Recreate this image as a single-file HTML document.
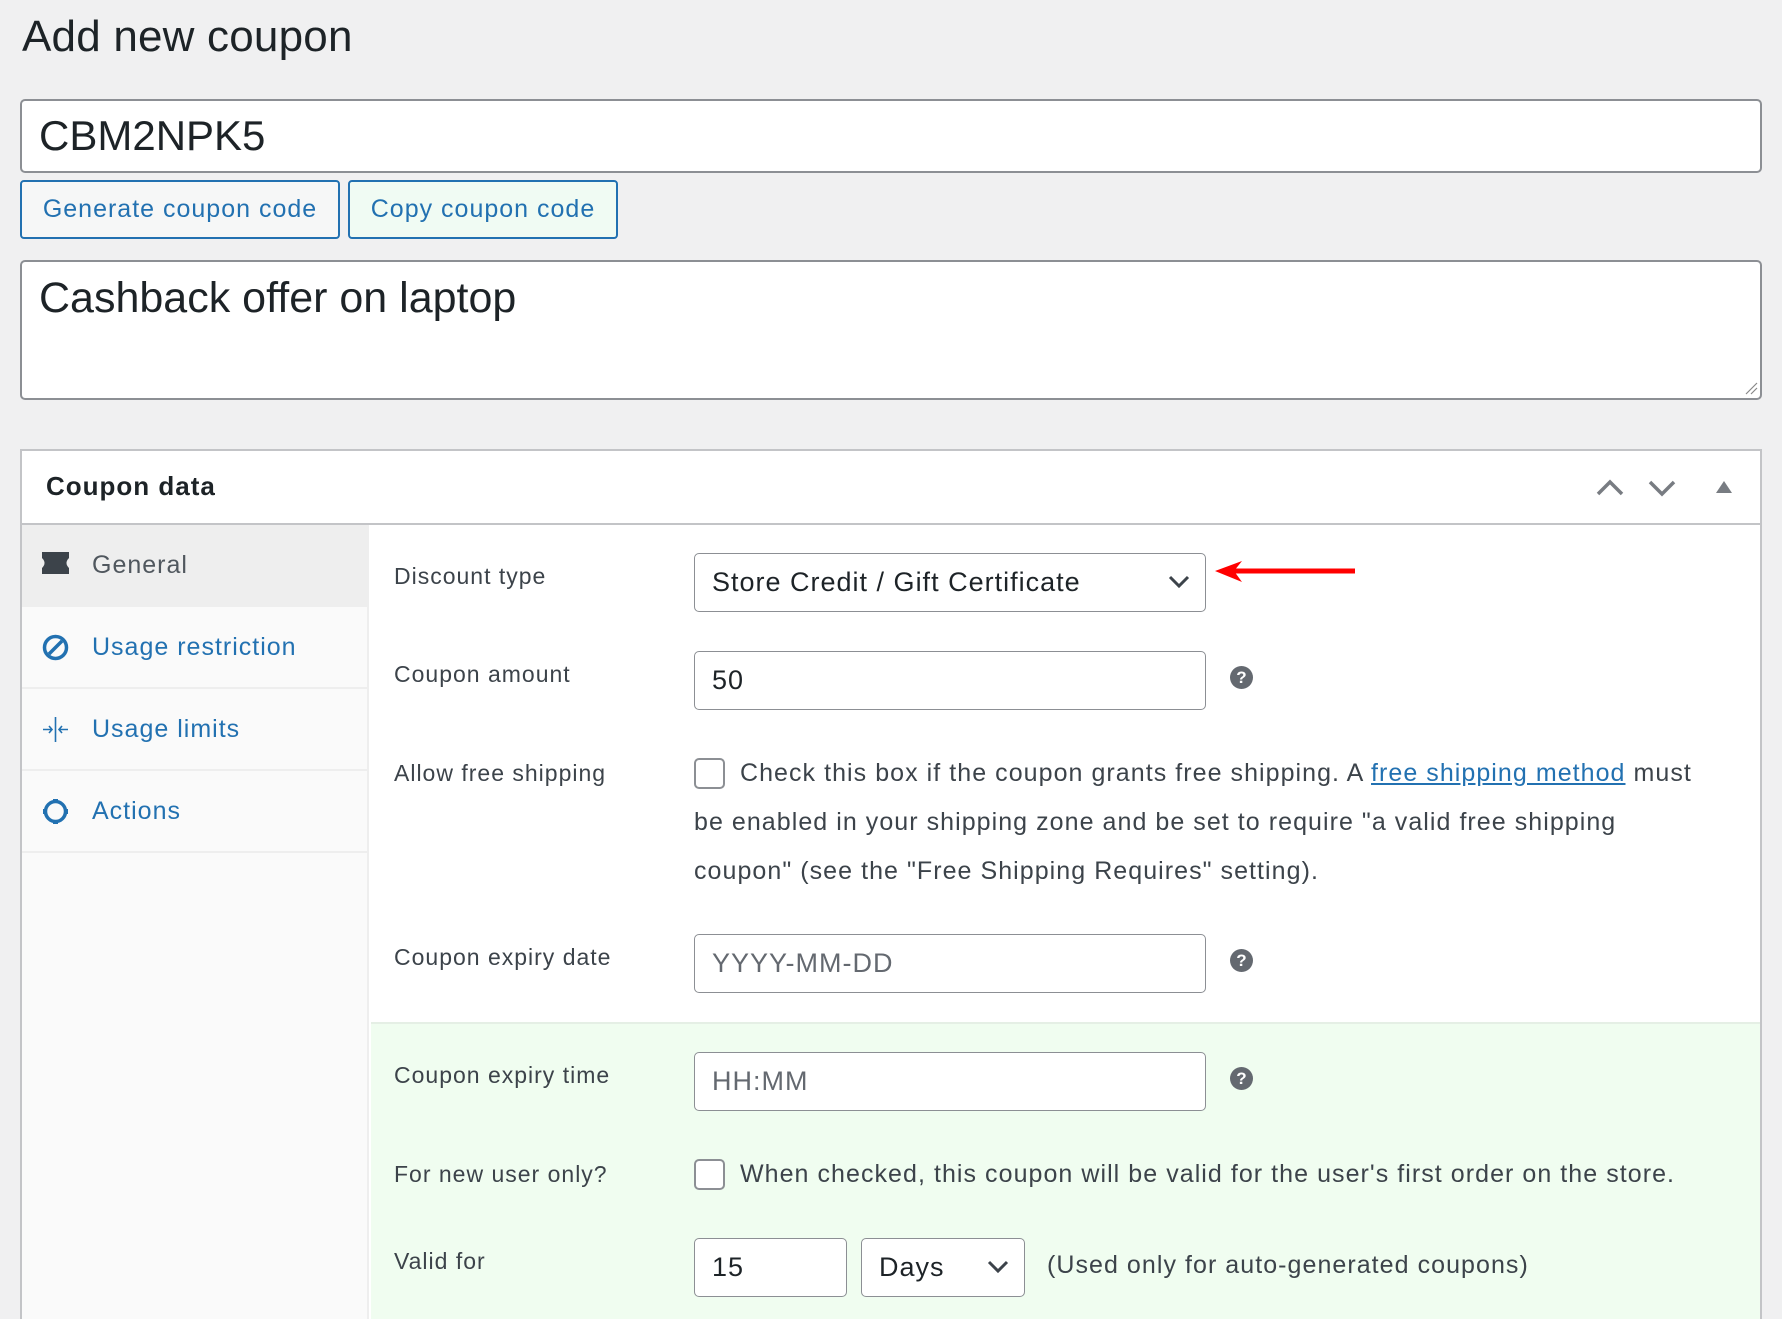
<!DOCTYPE html>
<html style="width:1782px;height:1319px;overflow:hidden"><head><meta charset="utf-8"><style>
*{box-sizing:border-box;margin:0;padding:0}
body{width:1782px;height:1319px;overflow:hidden;background:#f0f0f1;font-family:"Liberation Sans",sans-serif;color:#3c434a;position:relative;letter-spacing:1px}
.a{position:absolute}
h1{position:absolute;left:22px;top:12px;font-size:44px;font-weight:400;color:#1d2327;letter-spacing:0.2px}
.inp{position:absolute;background:#fff;border:2px solid #8c8f94;border-radius:5px;letter-spacing:0}
.btn{position:absolute;top:180px;height:59px;border:2px solid #2271b1;border-radius:4px;color:#2271b1;font-size:25px;display:flex;align-items:center;justify-content:center;background:#f6f7f7}
.lbl{position:absolute;left:394px;font-size:23px;color:#3c434a}
.fld{position:absolute;left:694px;width:512px;height:59px;background:#fff;border:1.5px solid #8c8f94;border-radius:5px;font-size:27px;padding-left:17px;display:flex;align-items:center;color:#1d2327}
.help{position:absolute;left:1230px;width:23px;height:23px;border-radius:50%;background:#646970;color:#fff;font-size:17px;font-weight:700;text-align:center;line-height:23px;letter-spacing:0}
.cb{position:absolute;left:694px;width:31px;height:31px;border:2px solid #8c8f94;border-radius:5px;background:#fff}
.txt{position:absolute;font-size:25px;color:#3c434a;letter-spacing:1.05px}
.tab{position:absolute;left:22px;width:347px;height:82px;border-bottom:2px solid #eee;font-size:25px;color:#2271b1;display:flex;align-items:center;padding-left:70px}
</style></head><body>
<h1>Add new coupon</h1>
<div class="inp" style="left:20px;top:99px;width:1742px;height:74px;font-size:42px;padding-left:17px;line-height:70px;color:#1d2327">CBM2NPK5</div>
<div class="btn" style="left:20px;width:320px">Generate coupon code</div>
<div class="btn" style="left:348px;width:270px;background:#f0fbf3">Copy coupon code</div>
<div class="inp" style="left:20px;top:260px;width:1742px;height:140px;font-size:43px;padding:12px 17px;color:#1d2327">Cashback offer on laptop</div>
<svg class="a" style="left:1744px;top:381px" width="14" height="14"><path d="M2 13L13 2M7 13L13 7" stroke="#888" stroke-width="1.2"/></svg>

<div class="a" style="left:20px;top:449px;width:1742px;height:870px;background:#fff;border:2px solid #c3c4c7;border-bottom:none"></div>
<div class="a" style="left:22px;top:523px;width:1738px;height:2px;background:#c3c4c7"></div>
<div class="a" style="left:46px;top:471px;font-size:26px;font-weight:700;color:#1d2327">Coupon data</div>
<svg class="a" style="left:1595px;top:474px" width="150" height="26"><path d="M3 20L15 8L27 20M55 8L67 20L79 8" stroke="#787c82" stroke-width="3.5" fill="none"/><path d="M121 19L129 7L137 19Z" fill="#787c82"/></svg>

<div class="a" style="left:22px;top:525px;width:347px;height:794px;background:#fafafa;border-right:2px solid #eee"></div>
<div class="tab" style="top:525px;background:#eee;color:#50575e">General</div>
<div class="tab" style="top:607px">Usage restriction</div>
<div class="tab" style="top:689px">Usage limits</div>
<div class="tab" style="top:771px">Actions</div>
<svg class="a" style="left:42px;top:552px" width="27" height="22"><path d="M0 0H27V6Q22 11 27 16V22H0V16Q5 11 0 6Z" fill="#3c434a"/></svg>
<svg class="a" style="left:42px;top:634px" width="27" height="27"><circle cx="13.5" cy="13.5" r="11" stroke="#2271b1" stroke-width="3.5" fill="none"/><path d="M7 20L20 7" stroke="#2271b1" stroke-width="3.5"/></svg>
<svg class="a" style="left:42px;top:716px" width="27" height="27"><path d="M13.5 1V26M1 13.5H10M7 10L10 13.5L7 17M26 13.5H17M20 10L17 13.5L20 17" stroke="#2271b1" stroke-width="1.6" fill="none"/></svg>
<svg class="a" style="left:42px;top:798px" width="27" height="27"><circle cx="13.5" cy="13.5" r="10" stroke="#2271b1" stroke-width="3.5" fill="none"/><g fill="#2271b1"><rect x="11" y="1" width="5" height="4"/><rect x="11" y="22" width="5" height="4"/><rect x="1" y="11" width="4" height="5"/><rect x="22" y="11" width="4" height="5"/></g></svg>

<div class="a" style="left:371px;top:1022px;width:1389px;height:297px;background:#f0fdf0;border-top:2px solid #e5efe5"></div>

<div class="lbl" style="top:563px">Discount type</div>
<div class="fld" style="top:553px">Store Credit / Gift Certificate</div>
<svg class="a" style="left:1168px;top:574px" width="22" height="16"><path d="M2 3L11 12L20 3" stroke="#3c434a" stroke-width="3" fill="none"/></svg>
<svg class="a" style="left:1212px;top:558px" width="150" height="28"><path d="M12 13H143" stroke="#f00" stroke-width="5"/><path d="M3 13L30 3L22 13L30 24Z" fill="#f00"/></svg>

<div class="lbl" style="top:661px">Coupon amount</div>
<div class="fld" style="top:651px">50</div>
<div class="help" style="top:666px">?</div>

<div class="lbl" style="top:760px">Allow free shipping</div>
<div class="cb" style="top:758px"></div>
<div class="txt" style="left:740px;top:759px">Check this box if the coupon grants free shipping. A <span style="color:#2271b1;text-decoration:underline">free shipping method</span> must</div>
<div class="txt" style="left:694px;top:808px">be enabled in your shipping zone and be set to require "a valid free shipping</div>
<div class="txt" style="left:694px;top:857px">coupon" (see the "Free Shipping Requires" setting).</div>

<div class="lbl" style="top:944px">Coupon expiry date</div>
<div class="fld" style="top:934px;color:#646970">YYYY-MM-DD</div>
<div class="help" style="top:949px">?</div>

<div class="lbl" style="top:1062px">Coupon expiry time</div>
<div class="fld" style="top:1052px;color:#646970">HH:MM</div>
<div class="help" style="top:1067px">?</div>

<div class="lbl" style="top:1161px">For new user only?</div>
<div class="cb" style="top:1159px"></div>
<div class="txt" style="left:740px;top:1160px">When checked, this coupon will be valid for the user's first order on the store.</div>

<div class="lbl" style="top:1248px">Valid for</div>
<div class="fld" style="top:1238px;width:153px">15</div>
<div class="fld" style="top:1238px;left:861px;width:164px">Days</div>
<svg class="a" style="left:987px;top:1259px" width="22" height="16"><path d="M2 3L11 12L20 3" stroke="#3c434a" stroke-width="3" fill="none"/></svg>
<div class="txt" style="left:1047px;top:1251px">(Used only for auto-generated coupons)</div>
</body></html>
